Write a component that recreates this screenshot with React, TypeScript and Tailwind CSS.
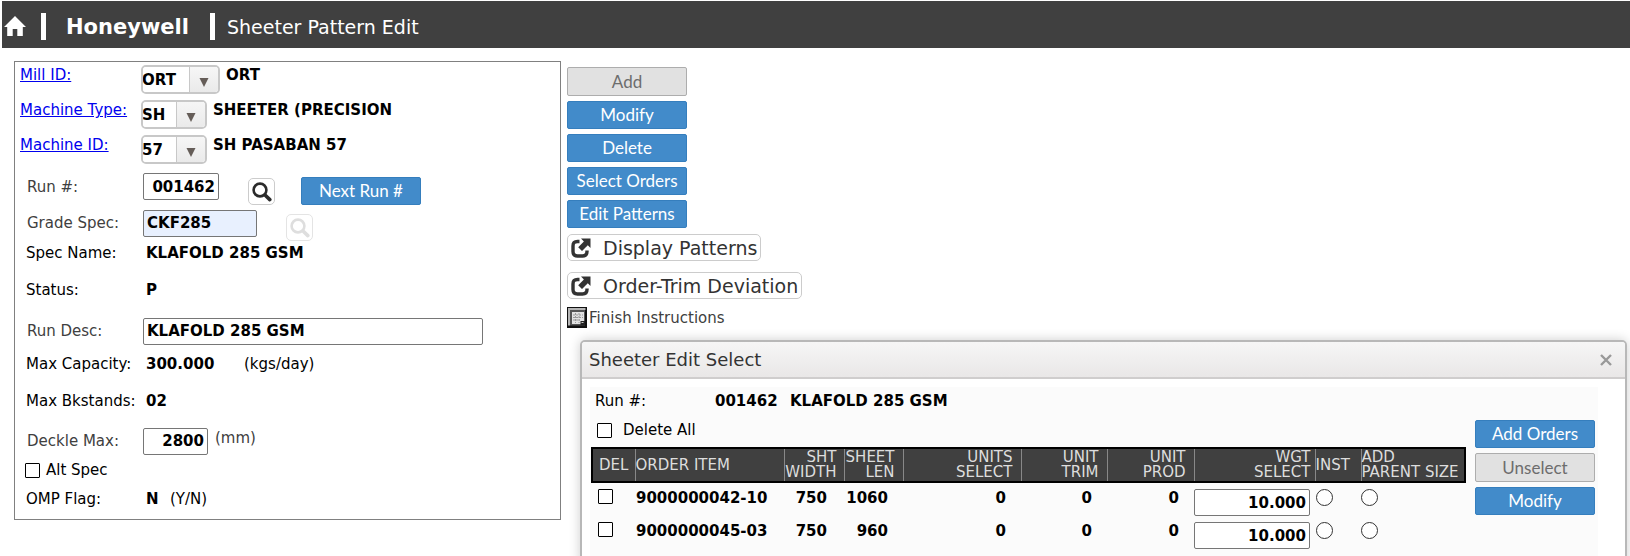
import React from "react";

const primary =
  "h-[28px] w-[120px] rounded-[2px] border border-[#357ebd] bg-[#428bca] text-center font-['Lato',sans-serif] text-[17px] leading-[26px] text-white";
const disabled =
  "h-[29px] w-[120px] rounded-[2px] border border-[#adadad] bg-[#e1e1e1] text-center font-['Lato',sans-serif] text-[17px] leading-[26px] text-[#6d6d6d]";
const field =
  "h-[27px] rounded-[2px] border border-[#767676] bg-white px-[3px] font-bold text-black";
const box = "size-[15px] shrink-0 appearance-none rounded-[1px] border border-black bg-white";
const radio = "block size-[17px] appearance-none rounded-full border border-[#333] bg-white";
const launch = "flex h-[27px] items-center gap-[12px] rounded-[5px] border border-[#ccc] px-[3px] text-[19px]";

function SearchIcon() {
  return (
    <svg viewBox="0 0 20 20" className="size-5" fill="none" stroke="currentColor">
      <circle cx="8" cy="8" r="6.4" strokeWidth="2.6" />
      <path d="M13 13l4.800 4.600" strokeWidth="3.600" strokeLinecap="round" />
    </svg>
  );
}

function ShareIcon() {
  return (
    <svg viewBox="0 0 20 20" className="size-5" fill="none">
      <path d="M8.500 3.500H6.500Q2 3.500 2 8V13.500Q2 18 6.500 18H11.500Q16 18 16 13.500V12.500" stroke="currentColor" strokeWidth="3.400" />
      <path d="M10 0.500H19.500V10L16.800 7.300L11 13L7.200 9.200L12.900 3.400Z" fill="currentColor" />
    </svg>
  );
}

function PickRow({ id, label, value, width, text }: { id: string; label: string; value: string; width: string; text: string }) {
  return (
    <div className="flex h-[35px] items-start pl-[5px] leading-[26px]">
      <label htmlFor={id} className="w-[121px]">
        <a href="#" className="text-[#0000ee] underline">{label}</a>
      </label>
      <span className={"relative mt-[3px] block h-[29px] overflow-hidden rounded-[5px] border-2 border-[#c8c8c8] bg-white " + width}>
        <select id={id} className="-ml-px block h-full w-full appearance-none bg-white font-bold text-black">
          <option>{value}</option>
        </select>
        <span className="pointer-events-none absolute inset-y-0 right-0 flex w-[29px] items-center justify-center border-l border-[#c8c8c8] bg-gradient-to-b from-[#f6f6f6] to-[#eaeaea] pt-[5px]">
          <svg viewBox="0 0 10 9" className="h-[9px] w-[10px]" fill="#655d58"><path d="M0.500 0H9.500L5 9Z" /></svg>
        </span>
      </span>
      <b className="pl-[6px]">{text}</b>
    </div>
  );
}

const orders = [
  { item: "9000000042-10", width: 750, len: 1060 },
  { item: "9000000045-03", width: 750, len: 960 },
];

export default function App() {
  return (
    <div className="flex h-screen flex-col overflow-hidden bg-white font-['DejaVu_Sans',sans-serif] text-[15px] leading-[18px] text-black">
      <header className="mt-px ml-[2px] flex h-[47px] shrink-0 items-center bg-[#404040] pt-[4px] text-white">
        <a href="#" aria-label="Home" className="ml-[2px] block pb-[2px]">
          <svg viewBox="0 0 22 20" className="h-5 w-[22px]" fill="currentColor">
            <path d="M11 0L22 11H18.800V20H13.300V13H8.700V20H3.200V11H0Z" />
          </svg>
        </a>
        <span className="ml-[15px] h-[27px] w-[5px] bg-white" />
        <b className="ml-[20px] w-[124px] text-[21px] leading-[26px]">Honeywell</b>
        <span className="ml-[20px] h-[27px] w-[5px] bg-white" />
        <h1 className="ml-[12px] text-[19px] leading-[26px]">Sheeter Pattern Edit</h1>
      </header>

      <main className="flex min-h-0 flex-1 items-start pt-[13px] pl-[14px]">
        <form className="w-[547px] shrink-0 border border-[#808080]">
          <PickRow id="mill" label="Mill ID:" value="ORT" width="w-[79px]" text="ORT" />
          <PickRow id="type" label="Machine Type:" value="SH" width="w-[66px]" text="SHEETER (PRECISION" />
          <PickRow id="machine" label="Machine ID:" value="57" width="w-[66px]" text="SH PASABAN 57" />
          <div className="flex h-[38px] items-center pt-px pl-[12px]">
            <label htmlFor="run" className="w-[116px] text-[#404040]">Run #:</label>
            <input id="run" defaultValue="001462" className={field + " w-[76px] text-right"} />
            <button type="button" aria-label="Find run" className="ml-[29px] flex size-[27px] items-center justify-center self-end rounded-[5px] border border-[#ccc] text-[#2b2b2b]"><SearchIcon /></button>
            <button type="button" className={primary + " ml-[26px] self-end"}>Next Run #</button>
          </div>
          <div className="flex h-[36px] items-center pl-[12px]">
            <label htmlFor="grade" className="w-[116px] text-[#404040]">Grade Spec:</label>
            <input id="grade" defaultValue="CKF285" className="h-[27px] w-[114px] rounded-[2px] border border-[#767676] bg-[#e8f0fe] px-[3px] font-bold" />
            <button type="button" disabled aria-label="Find grade" className="ml-[29px] flex size-[27px] items-center justify-center self-end rounded-[5px] border border-[#e4e4e4] text-[#dedede]"><SearchIcon /></button>
          </div>
          <div className="flex h-[24px] items-center pl-[11px]">
            <span className="w-[120px]">Spec Name:</span><b>KLAFOLD 285 GSM</b>
          </div>
          <div className="flex h-[50px] items-center pl-[11px]">
            <span className="w-[120px]">Status:</span><b>P</b>
          </div>
          <div className="flex h-[32px] items-center pl-[12px]">
            <label htmlFor="desc" className="w-[116px] text-[#404040]">Run Desc:</label>
            <input id="desc" defaultValue="KLAFOLD 285 GSM" className={field + " w-[340px]"} />
          </div>
          <div className="flex h-[34px] items-center pl-[11px]">
            <span className="w-[120px]">Max Capacity:</span><b className="w-[98px]">300.000</b><span>(kgs/day)</span>
          </div>
          <div className="flex h-[40px] items-center pl-[11px]">
            <span className="w-[120px]">Max Bkstands:</span><b>02</b>
          </div>
          <div className="flex h-[40px] items-center pl-[12px] text-[#404040]">
            <label htmlFor="deckle" className="w-[116px]">Deckle Max:</label>
            <input id="deckle" defaultValue="2800" className={field + " w-[65px] text-right"} />
            <span className="pb-[6px] pl-[7px]">(mm)</span>
          </div>
          <label className="flex h-[18px] items-center gap-[6px] pl-[10px]">
            <input type="checkbox" className={box} />Alt Spec
          </label>
          <div className="flex h-[40px] items-center pl-[11px]">
            <span className="w-[120px]">OMP Flag:</span><b className="w-[24px]">N</b><span>(Y/N)</span>
          </div>
        </form>

        <div className="flex h-full min-w-0 flex-1 flex-col pl-[6px]">
          <div className="flex flex-col items-start gap-[5px] pt-[6px]">
            <button disabled className={disabled}>Add</button>
            <button className={primary}>Modify</button>
            <button className={primary}>Delete</button>
            <button className={primary}>Select Orders</button>
            <button className={primary}>Edit Patterns</button>
          </div>
          <div className="flex flex-col items-start gap-[11px] pt-[6px] text-[#333]">
            <button className={launch}><ShareIcon />Display Patterns</button>
            <button className={launch}><ShareIcon />Order-Trim Deviation</button>
          </div>
          <a href="#" className="flex items-center gap-[2px] pt-[8px] text-[#404040]">
            <svg viewBox="0 0 20 21" className="h-[21px] w-5">
              <path d="M0 0H20V21H0Z" fill="#111" />
              <path d="M1 1H18.500V3H3V18.500H1Z" fill="#b5b5b5" />
              <path d="M3 3H18V18.500H3Z" fill="#555" />
              <path d="M5 5H17V17H5Z" fill="#e2e2e2" />
              <path d="M6 8H16M6 10.500H16M6 13H13M8.500 6V16M12 6V16" stroke="#999" strokeDasharray="2 1" />
              <path d="M13.500 14H18V18.500H13.500Z" fill="#222" />
              <path d="M14.500 15H16.500V16H14.500Z" fill="#ccc" />
            </svg>
            Finish Instructions
          </a>

          <section className="mt-[12px] mr-[3px] -mb-2 ml-[13px] flex min-h-0 flex-1 flex-col rounded-t-[5px] border-2 border-[#b8b8b8] bg-white shadow-[0_0_12px_rgba(0,0,0,0.2)]">
            <div className="flex h-[37px] shrink-0 items-center justify-between rounded-t-[3px] border-b-2 border-[#cfcdcd] bg-gradient-to-b from-[#f6f6f6] to-[#e9e7e7] pr-[13px] pl-[7px]">
              <h2 className="text-[18px] text-[#333]">Sheeter Edit Select</h2>
              <button aria-label="Close" className="text-[#999]">
                <svg viewBox="0 0 12 12" className="size-3" stroke="currentColor" strokeWidth="2.4"><path d="M1 1L11 11M11 1L1 11" /></svg>
              </button>
            </div>
            <div className="mt-[8px] mr-[27px] ml-[8px] flex flex-1 bg-[#fbfbfb]">
              <div className="min-w-0 flex-1 pt-[5px] pl-px">
                <div className="flex pl-[4px]"><span className="w-[120px]">Run #:</span><b className="w-[75px]">001462</b><b>KLAFOLD 285 GSM</b></div>
                <label className="mt-[11px] flex items-center gap-[11px] pl-[6px]"><input type="checkbox" className={box} />Delete All</label>
                <table className="mt-[8px] w-full table-fixed border-collapse">
                  <colgroup>
                    <col className="w-[43px]" /><col className="w-[149px]" /><col className="w-[60px]" /><col className="w-[59px]" /><col className="w-[118px]" /><col className="w-[86px]" /><col className="w-[87px]" /><col className="w-[121px]" /><col className="w-[46px]" /><col />
                  </colgroup>
                  <thead>
                    <tr className="h-[34px] border-2 border-black bg-[#404040] text-right leading-[15px] text-[#ddd] [&>th]:border-l [&>th]:border-[#888] [&>th]:p-0 [&>th]:font-normal">
                      <th className="text-center">DEL</th>
                      <th className="text-left">ORDER ITEM</th>
                      <th className="pr-[7px]!">SHT<br />WIDTH</th>
                      <th className="pr-2!">SHEET<br />LEN</th>
                      <th className="pr-2!">UNITS<br />SELECT</th>
                      <th className="pr-2!">UNIT<br />TRIM</th>
                      <th className="pr-2!">UNIT<br />PROD</th>
                      <th className="pr-1!">WGT<br />SELECT</th>
                      <th className="text-left">INST</th>
                      <th className="text-left">ADD<br />PARENT SIZE</th>
                    </tr>
                  </thead>
                  <tbody>
                    {orders.map((o) => (
                      <tr key={o.item} className="h-[33px] text-right align-top font-bold [&>td]:p-0 [&>td]:pt-[6px]">
                        <td className="pl-[6px]!"><input type="checkbox" aria-label={"Delete " + o.item} className={box + " block"} /></td>
                        <td className="pl-px! text-left">{o.item}</td>
                        <td className="pr-[17px]!">{o.width}</td>
                        <td className="pr-[15px]!">{o.len}</td>
                        <td className="pr-[15px]!">0</td>
                        <td className="pr-[15px]!">0</td>
                        <td className="pr-[15px]!">0</td>
                        <td className="pr-[5px]!"><input aria-label={"Weight " + o.item} defaultValue="10.000" className={field + " block w-full text-right"} /></td>
                        <td className="pl-px!"><input type="radio" name="inst" aria-label={"Instructions " + o.item} className={radio} /></td>
                        <td><input type="radio" name="parent" aria-label={"Parent size " + o.item} className={radio} /></td>
                      </tr>
                    ))}
                  </tbody>
                </table>
              </div>
              <div className="flex flex-col gap-[5px] pt-[33px] pr-[3px] pl-[9px]">
                <button className={primary}>Add Orders</button>
                <button disabled className={disabled}>Unselect</button>
                <button className={primary}>Modify</button>
              </div>
            </div>
          </section>
        </div>
      </main>
    </div>
  );
}
